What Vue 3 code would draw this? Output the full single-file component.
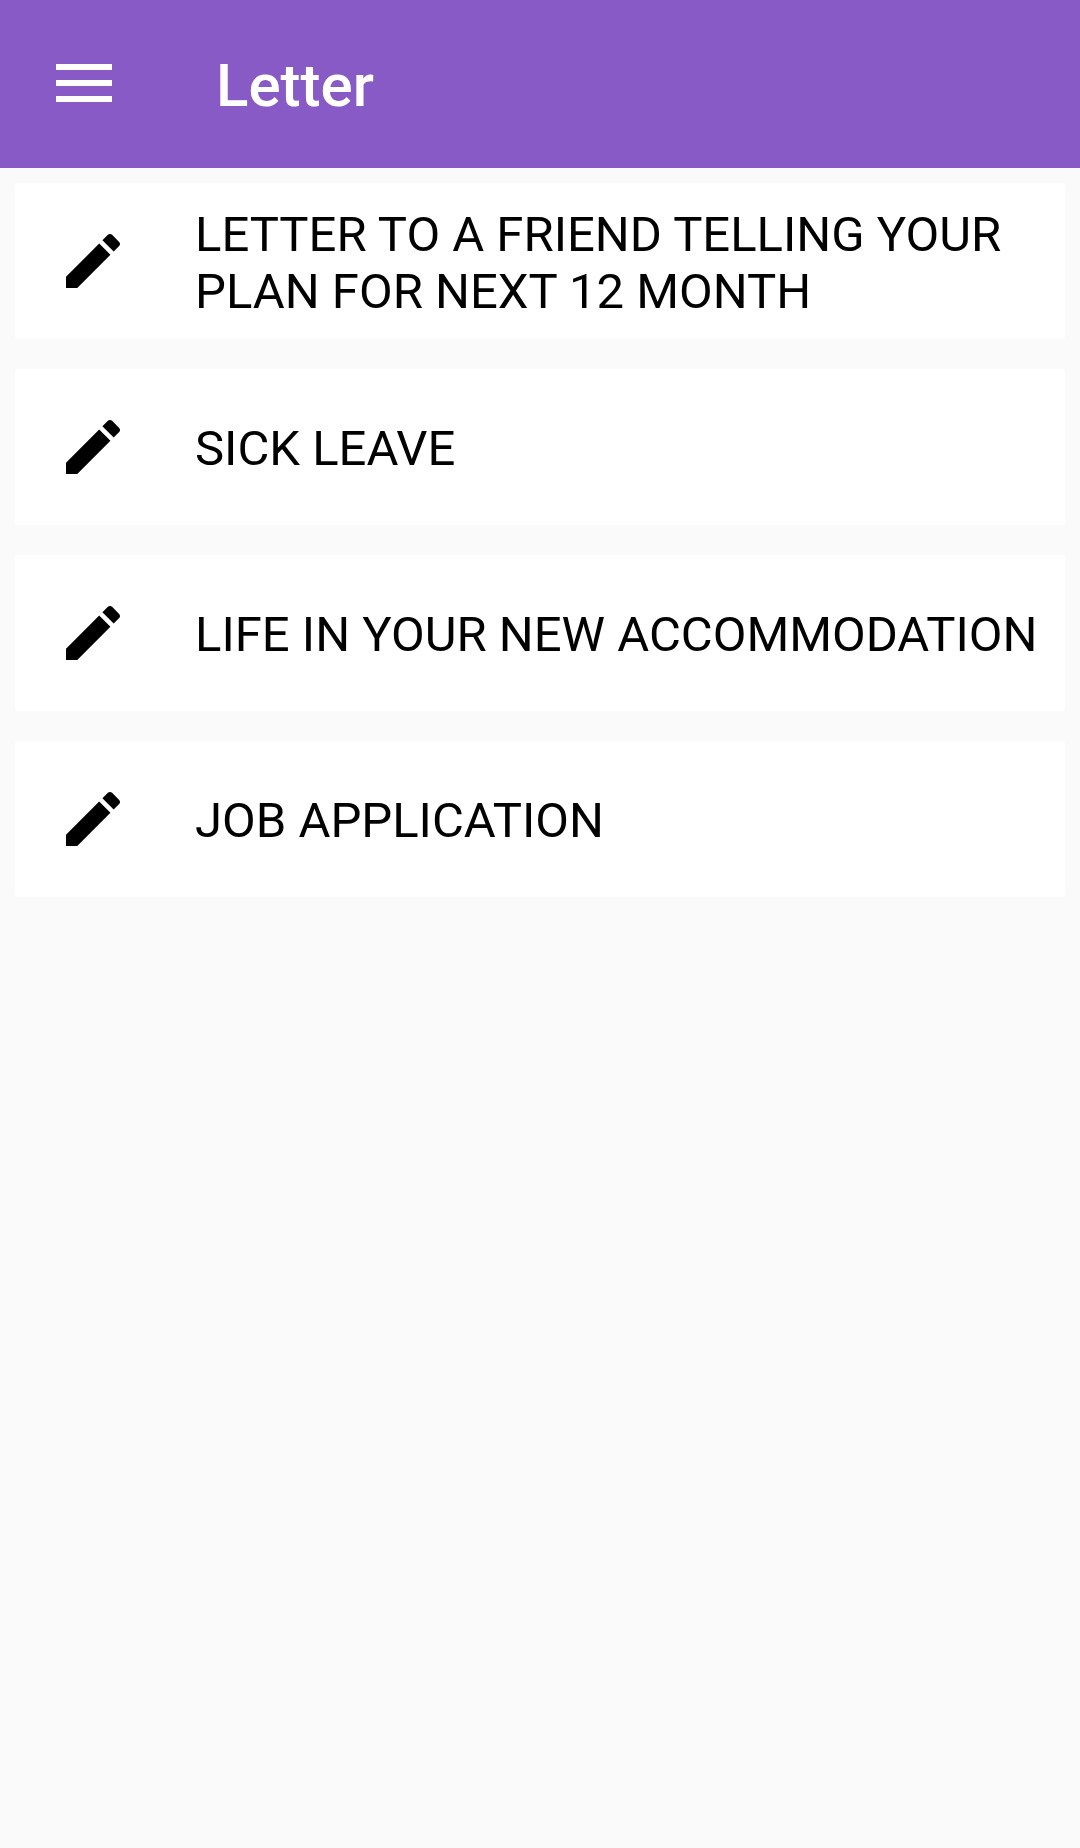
<template>
  <div class="page">
    <header class="app-bar">
      <div class="menu">
        <span></span>
        <span></span>
        <span></span>
      </div>
      <div class="title">Letter</div>
    </header>
    <div class="list">
      <div v-for="item in items" :key="item" class="card">
        <svg class="pencil" viewBox="0 0 24 24">
          <path d="M3 17.25V21h3.75L17.81 9.94l-3.75-3.75L3 17.25zM20.71 7.04c.39-.39.39-1.02 0-1.41l-2.34-2.34c-.39-.39-1.02-.39-1.41 0l-1.83 1.83 3.75 3.75 1.83-1.83z" />
        </svg>
        <div class="label">{{ item }}</div>
      </div>
    </div>
  </div>
</template>

<script setup>
const items = [
  'LETTER TO A FRIEND TELLING YOUR PLAN FOR NEXT 12 MONTH',
  'SICK LEAVE',
  'LIFE IN YOUR NEW ACCOMMODATION',
  'JOB APPLICATION',
]
</script>

<style>
body {
  margin: 0;
  background: #fafafa;
}
</style>

<style scoped>
.page {
  height: 1848px;
  background: #fafafa;
  font-family: Roboto, sans-serif;
}

.app-bar {
  height: 168px;
  background: #885ac6;
  display: flex;
  align-items: center;
  padding-left: 56px;
  color: #fff;
}

.menu {
  width: 56px;
  display: flex;
  flex-direction: column;
  gap: 10px;
  margin: -2px 104px 0 0;
}

.menu span {
  height: 6px;
  background: #fff;
}

.title {
  font-size: 60px;
  font-weight: 500;
  padding-top: 3px;
}

.list {
  padding: 15px 15px 0;
  display: flex;
  flex-direction: column;
  gap: 30px;
}

.card {
  height: 156px;
  background: #fff;
  border-radius: 3px;
  display: flex;
  align-items: center;
  padding-left: 42px;
}

.pencil {
  width: 72px;
  height: 72px;
  flex: none;
  margin-right: 66px;
}

.label {
  font-size: 49px;
  line-height: 57px;
  color: #000;
  padding-top: 3px;
}
</style>
